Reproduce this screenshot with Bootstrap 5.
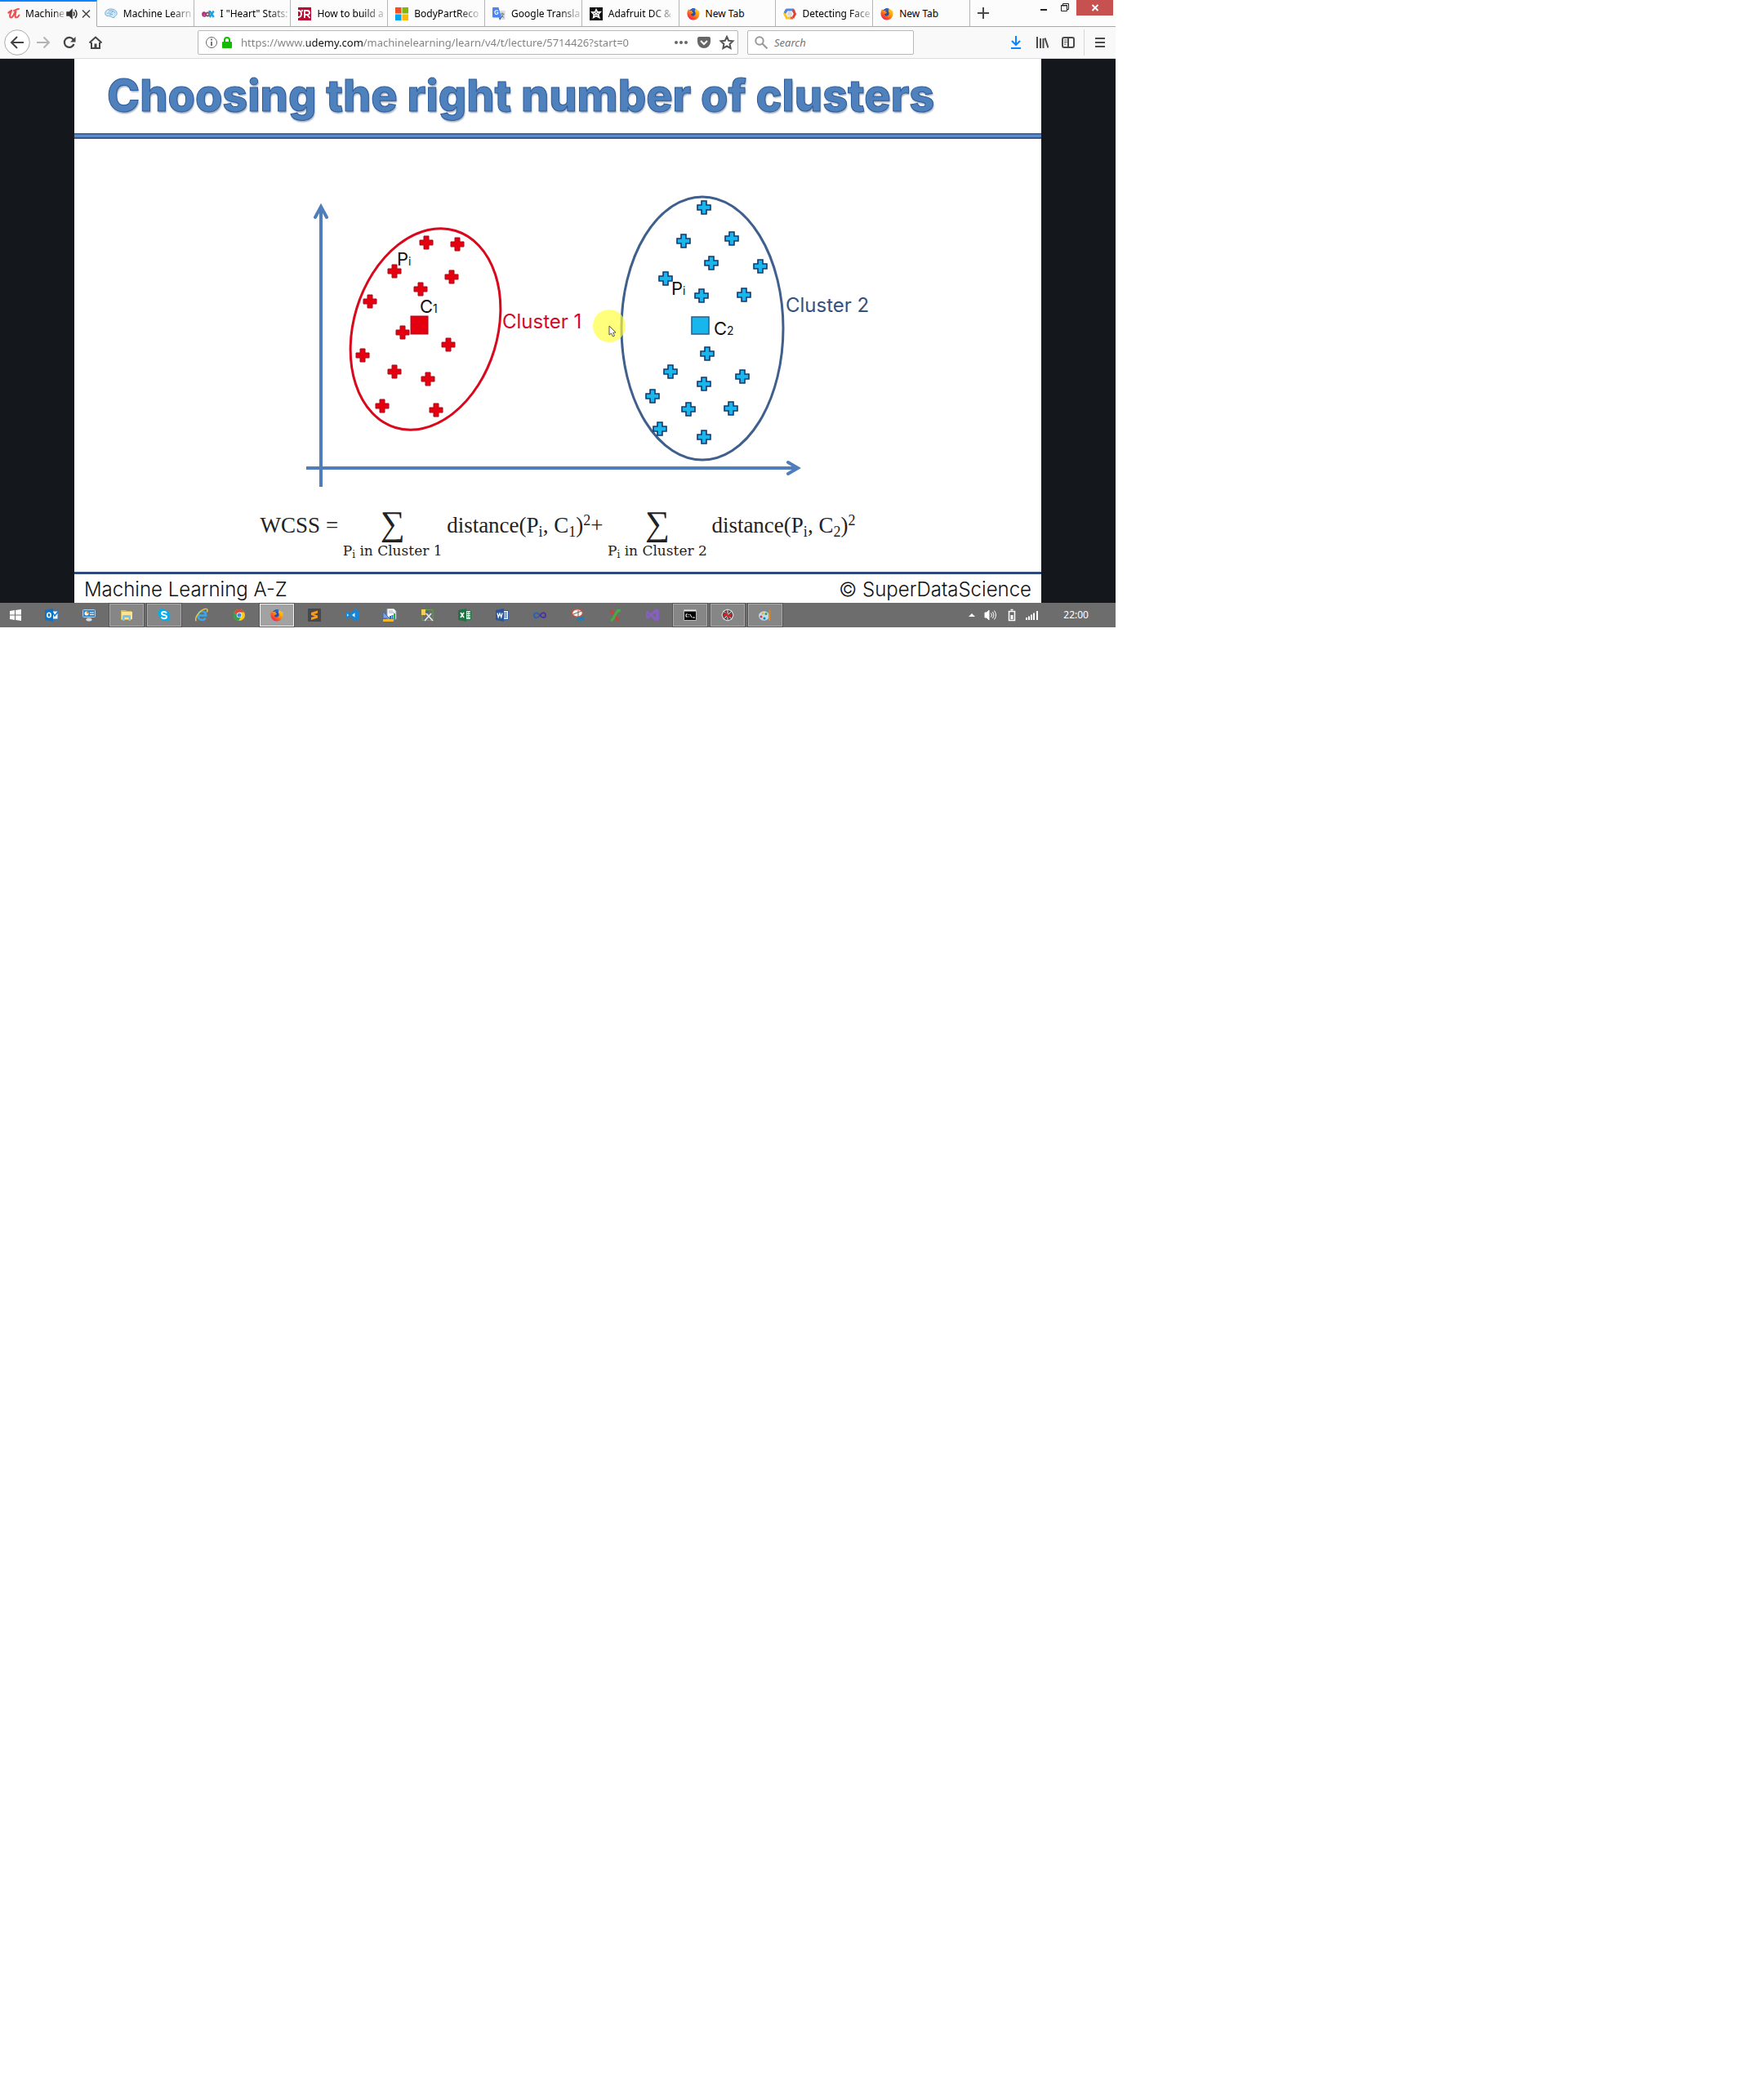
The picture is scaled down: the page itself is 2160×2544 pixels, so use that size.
<!DOCTYPE html>
<html lang="en">
<head>
<meta charset="utf-8">
<meta name="viewport" content="width=device-width, initial-scale=1">
<title>Machine Learning A-Z</title>
<link href="https://cdn.jsdelivr.net/npm/bootstrap@5.3.0/dist/css/bootstrap.min.css" rel="stylesheet">
<script src="https://cdn.jsdelivr.net/npm/bootstrap@5.3.0/dist/js/bootstrap.bundle.min.js" defer></script>
<style>
body { background: #fff; font-family: "Noto Sans", "Open Sans", sans-serif; font-size: 12px; line-height: 16px; color: #0c0c0d; }
svg { display: block; flex: none; }
button { font: inherit; color: inherit; }
.desk { max-width: 1366px; }
/* tab strip */
.strip { background: #fcfcfc; height: 33px; }
.strip-end { flex: none; width: 178px; border-bottom: 1px solid #a9a9a9; }
.tabs-row { display: grid; grid-template-columns: repeat(10, minmax(0, 1fr)); flex: 1 1 0; min-width: 0; }
.tab { min-width: 0; height: 33px; padding: 2px 4px 0 9px; gap: 7px; background: none; border: 0; border-right: 1px solid #b5b5b5; border-bottom: 1px solid #a9a9a9; color: #000; }
.tab.current { background: #f9f9fa; border-bottom-color: #f9f9fa; border-top: 2px solid #0a84ff; padding: 0 4px 0 9px; gap: 6px; border-right-color: #a9a9a9; }
.tab-name { white-space: nowrap; text-align: left; -webkit-mask-image: linear-gradient(90deg, #000 70%, #0003); mask-image: linear-gradient(90deg, #000 70%, #0003); }
.tab-name.whole { -webkit-mask-image: none; mask-image: none; }
.tab-tools { margin-left: -4px; }
.winbtn { border: 0; background: none; padding: 0; height: 19px; }
.win-small { width: 26px; }
.win-close { background: #c75050; width: 45px; margin-right: 3px; }
.plus { border: 0; background: none; padding: 0; width: 32px; height: 32px; }
/* tool bar */
.tools { height: 39px; background: #f9f9fa; border-bottom: 1px solid #dcdcdc; padding: 0 3px 0 5px; }
.tool { border: 0; background: none; padding: 0; width: 32px; height: 32px; display: flex; align-items: center; justify-content: center; }
.field { height: 30px; background: #fff; border: 1px solid #b8b8b8; border-radius: 2px; }
.address { margin-left: 109px; padding: 0 3px 0 8px; }
.address input, .search input { border: 0; outline: 0; background: transparent; padding: 0; min-width: 0; font-size: 13px; line-height: 20px; }
.address input { margin-left: 6px; color: transparent; background-image: linear-gradient(90deg, #808080 80px, #0c0c0d 80px, #0c0c0d 150px, #808080 150px); -webkit-background-clip: text; background-clip: text; }
.search { width: 204px; margin-left: 11px; padding: 0 8px; gap: 8px; }
.search input::placeholder { color: #757575; font-style: italic; opacity: 1; }
.search input { width: 120px; }
.rightset { margin-left: 109px; }
.divline { width: 1px; height: 32px; background: #d7d7db; margin: 0 3px; }
/* slide */
.stage { background: #14181d; }
.slide { max-width: 1184px; background: #fff; font-family: Inter, "Open Sans", sans-serif; color: #111; }
.slide h1 { margin: 0; padding: 15px 40px 16px; font-size: 54px; line-height: 60px; font-weight: 800; color: #4f81bd; -webkit-text-stroke: 1px #2c5c9c; text-shadow: 1px 2px 2px #9aa4b4; white-space: nowrap; }
.bar-top { height: 7px; background: #5b8bd0; border-top: 2px solid #3d66a0; border-bottom: 2px solid #34568a; }
.bar-foot { height: 3px; background: #2c4a7c; }
.formula { height: 90px; padding-top: 17px; font-family: "Liberation Serif", serif; font-size: 27px; line-height: 32px; color: #222; white-space: nowrap; }
.formula sub, .formula sup { font-size: 18px; line-height: 0; }
.sum { width: 123px; }
.sum-sign { font-size: 42px; line-height: 28px; margin-bottom: 10px; }
.sum-under { font-family: "DejaVu Serif", serif; font-size: 17px; line-height: 18px; }
.sum-under sub { font-size: 12px; }
.gap-a { column-gap: 5px; }
.foot { height: 35px; padding: 0 12px; font-size: 24px; line-height: 37px; font-weight: 300; }
/* task bar */
.taskbar { height: 30px; background: #6d6d6d; }
.task { width: 42px; height: 30px; border: 0; background: none; padding: 0; display: flex; align-items: center; justify-content: center; }
.task.start { width: 38px; }
.task.open { background: #868686; border: 1px solid #a9a9a9; outline: 1px solid #555; outline-offset: 0; height: 28px; }
.task.front { background: #a2a2a2; border-color: #f4f4f4; }
.tray { gap: 9px; color: #fff; }
.clock { width: 94px; padding-right: 33px; text-align: right; color: #fff; }
</style>
</head>
<body>
<svg width="0" height="0" class="position-absolute" aria-hidden="true">
  <defs>
    <linearGradient id="fxg" x1="1" y1="0" x2="0.2" y2="1"><stop offset="0" stop-color="#ffe226"/><stop offset=".45" stop-color="#ff9a0a"/><stop offset=".75" stop-color="#ff4a2a"/><stop offset="1" stop-color="#e5156c"/></linearGradient>
    <symbol id="fx" viewBox="0 0 16 16"><circle cx="8" cy="8.200" r="6.800" fill="#2450a8"/><path d="M1 4.500 2 2l1.600 2L7 3.600 6 5l2 1-1 1.600-2 .6c.2 2 2 2.800 3.500 2.200 2-.8 2.600-2.600 1.800-4.400-.6-1.400-1.300-2-1-4.600 2.500.6 4 1.600 4.600 3.200L15 4c1.200 4.500.2 8-2.600 10.200-3 2-7 1.700-9.400-.7C.4 11-.1 7.600 1 4.500z" fill="url(#fxg)"/><path d="M6 1.500c2-.8 3.600-.4 4.500.2L9.800 5 7 4z" fill="#2d63c8"/></symbol>
    <path id="cr" d="M-3-8H3V-3H8V3H3V8H-3V3H-8V-3H-3Z"/>
  </defs>
</svg>

<div class="desk">
<header>
  <div class="strip d-flex">
    <div class="tabs-row" role="tablist">
      <button class="tab current d-flex align-items-center" role="tab" aria-selected="true">
        <svg width="16" height="16" viewBox="0 0 16 16" fill="none" stroke="#ec5252" stroke-linecap="round" stroke-linejoin="round"><path d="M1.500 6.500 5 4C3.500 7.500 2 12.500 4.500 12.500S8 9 9.500 5.500" stroke-width="2.200"/><path d="M8 4c2 0 3-2 6-2M10.500 5C9.500 9 9 12.500 11 12.500s2.500-1.500 3.500-3" stroke-width="2"/></svg>
        <span class="tab-name">Machine</span>
        <svg class="tab-tools" width="32" height="16" viewBox="0 0 32 16" fill="none" stroke="#333" stroke-width="1.500"><path d="M1 6h3l3-3v10l-3-3H1z" fill="#333"/><path d="M9 5.500q2 2.500 0 5M11 3q4 5 0 10"/><path d="m20 3.500 9 9m0-9-9 9" stroke="#444"/></svg>
      </button>
      <button class="tab d-flex align-items-center" role="tab">
        <svg width="16" height="16" viewBox="0 0 16 16" fill="none" stroke="#6fb2e0"><path d="M1 9C-.5 5 4 1.500 8 2c5 0 8 3.500 7 6.500-.5 2-2.500 1.500-3 4H9.500C8 9.500 3 12 1 9z" fill="#cfe6f6"/><path d="M3 8c2-3 4 1 6-2s3 0 4 1M5 4c2 1 4-1 6 1M6 9l4-.5"/></svg>
        <span class="tab-name">Machine Learn</span></button>
      <button class="tab d-flex align-items-center" role="tab">
        <svg width="16" height="16" viewBox="0 0 16 16" fill="none" stroke-width="1.800"><path d="M1.500 8.500h3.300C4.500 5 1 6 1 8.500s3 3 4 1.500" stroke="#b52b82"/><circle cx="7.200" cy="8.500" r="2" stroke="#8a4a66"/><path d="M9.300 4v7" stroke="#777"/><path d="m9.700 4.500 5 7.500m0-7.500-5 7.500" stroke="#1d9fe0" stroke-width="2.400"/></svg>
        <span class="tab-name">I "Heart" Stats:</span></button>
      <button class="tab d-flex align-items-center" role="tab">
        <svg width="16" height="16" viewBox="0 0 16 16"><path fill="#bd0a34" d="M0 0h16v16H0z"/><path d="M0 4q4 0 4 4t-4 4M5.500 3l-1 2M8 13V4h3q3 0 3 2.500T11 9H8m3 0 3.500 4" fill="none" stroke="#fff" stroke-width="1.800"/></svg>
        <span class="tab-name">How to build a</span></button>
      <button class="tab d-flex align-items-center" role="tab">
        <svg width="16" height="16" viewBox="0 0 16 16"><path fill="#f25022" d="M0 0h7.500v7.500H0z"/><path fill="#7fba00" d="M8.500 0H16v7.500H8.500z"/><path fill="#00a4ef" d="M0 8.500h7.500V16H0z"/><path fill="#ffb900" d="M8.500 8.500H16V16H8.500z"/></svg>
        <span class="tab-name">BodyPartReco</span></button>
      <button class="tab d-flex align-items-center" role="tab">
        <svg width="16" height="16" viewBox="0 0 16 16"><path fill="#dcdcdc" d="M6 4h9.500v11H9z"/><path d="m9.500 8 5 .2M12 6.500v1.500m1.500.5L10.500 13m0-3.500 3.500 3" stroke="#5f7480" fill="none"/><path fill="#4a86f0" d="M1 0h6.500l3.500 12.500H1a1 1 0 0 1-1-1V1a1 1 0 0 1 1-1z"/><path fill="#3455c4" d="M8 12.500h3L9 16z"/><path d="M7 4.700Q5 3 3.500 4.500T4 8.300q2.500.7 3-1.800H5" stroke="#fff" stroke-width="1.100" fill="none"/></svg>
        <span class="tab-name">Google Transla</span></button>
      <button class="tab d-flex align-items-center" role="tab">
        <svg width="16" height="16" viewBox="0 0 16 16"><path fill="#111" d="M0 0h16v16H0z"/><path fill="#fff" d="m8 1 2 4 5-.2-3.500 4L13 14l-5-2.500L3.500 14l1-5L1 5l5 .2z"/><path d="M8 5v2M5 7l1.800 1M11 7 9.200 8M6.500 10.500 7.500 9M9.500 10.500 8.500 9" stroke="#111" stroke-width=".9"/></svg>
        <span class="tab-name">Adafruit DC &amp;</span></button>
      <button class="tab d-flex align-items-center" role="tab"><svg width="16" height="16"><use href="#fx"/></svg><span class="tab-name whole">New Tab</span></button>
      <button class="tab d-flex align-items-center" role="tab">
        <svg width="16" height="16" viewBox="0 0 16 16" fill="none" stroke-width="3"><path d="M4 3h8l1.500 2.500" stroke="#4d86ec"/><path d="m12 3 2.500 5-2.700 5" stroke="#e04438"/><path d="M8 13h4" stroke="#e8603a"/><path d="M4 3 1.700 8l2.600 5H9" stroke="#f7c52e"/><path d="M4.500 2.500 2 7" stroke="#4d86ec"/><circle cx="8" cy="8" r="3" fill="#d9d9dc"/></svg>
        <span class="tab-name">Detecting Face</span></button>
      <button class="tab d-flex align-items-center" role="tab"><svg width="16" height="16"><use href="#fx"/></svg><span class="tab-name whole">New Tab</span></button>
    </div>
    <div class="strip-end d-flex justify-content-between">
      <button class="plus" aria-label="New tab"><svg width="32" height="32" viewBox="0 0 32 32" stroke="#4a4a4a" stroke-width="2"><path d="M9 16h14M16 9v14"/></svg></button>
      <div class="d-flex">
        <button class="winbtn win-small" aria-label="Minimize"><svg width="26" height="19" viewBox="0 0 26 19"><path fill="#222" d="M8 11h8v2H8z"/></svg></button>
        <button class="winbtn win-small" aria-label="Restore"><svg width="26" height="19" viewBox="0 0 26 19" fill="none" stroke="#222"><path d="M7.500 6.500h7v7h-7z" /><path d="M7 7h8M9.500 6V4.500h7v7H15"/></svg></button>
        <button class="winbtn win-close" aria-label="Close"><svg width="45" height="19" viewBox="0 0 45 19" stroke="#fff" stroke-width="1.800"><path d="m19.500 6 7 7m0-7-7 7"/></svg></button>
      </div>
    </div>
  </div>
  <div class="tools d-flex align-items-center">
    <button class="tool" aria-label="Back"><svg width="32" height="32" viewBox="0 0 32 32" fill="none"><circle cx="16" cy="16" r="15.300" fill="#fff" stroke="#aaa"/><path d="M24 16H9m7-7-7 7 7 7" stroke="#444" stroke-width="2"/></svg></button>
    <button class="tool" aria-label="Forward"><svg width="16" height="16" viewBox="0 0 16 16" fill="none" stroke="#b4b4b4" stroke-width="2"><path d="M0 8h15M8.500 1.500 15 8l-6.500 6.500"/></svg></button>
    <button class="tool" aria-label="Reload"><svg width="16" height="16" viewBox="0 0 16 16" fill="none" stroke="#444" stroke-width="2.200"><path d="M12.800 4.500A6 6 0 1 0 13.500 10"/><path d="M15.500 1v6.500H9z" fill="#444" stroke="none"/></svg></button>
    <button class="tool" aria-label="Home"><svg width="16" height="16" viewBox="0 0 16 16" fill="none" stroke="#444" stroke-width="2"><path d="M.5 8.500 8 1.500l7.500 7M3 8v7h10V8"/><path d="M6.500 9.500h3V15h-3z" fill="#444" stroke="none"/></svg></button>
    <div class="field address d-flex align-items-center flex-fill gap-1">
      <svg width="16" height="16" viewBox="0 0 16 16" fill="none" stroke="#666"><circle cx="8" cy="8" r="6.500"/><path d="M8 3.500v2M8 7v5" stroke-width="1.800"/></svg>
      <svg width="14" height="16" viewBox="0 0 14 16"><path d="M4 8V5a3 3 0 0 1 6 0v3" fill="none" stroke="#12bc00" stroke-width="2"/><rect x="1" y="7" width="12" height="8" rx="1" fill="#12bc00"/></svg>
      <input class="flex-fill" type="text" aria-label="Address" value="https://www.udemy.com/machinelearning/learn/v4/t/lecture/5714426?start=0">
      <div class="d-flex gap-2 align-items-center">
        <svg width="20" height="16" viewBox="0 0 20 16" fill="#666"><circle cx="4" cy="8" r="2"/><circle cx="10" cy="8" r="2"/><circle cx="16" cy="8" r="2"/></svg>
        <svg width="20" height="16" viewBox="0 0 20 16"><path d="M4 1h12q2 0 2 2v4a8 8 0 0 1-16 0V3q0-2 2-2z" fill="#666"/><path d="m6 6 4 4 4-4" fill="none" stroke="#fff" stroke-width="2"/></svg>
        <svg width="20" height="18" viewBox="0 0 20 18"><path d="m10 2 2.200 4.700 5.200.6-3.800 3.600 1 5.100L10 13.500 5.400 16l1-5.100-3.800-3.600 5.200-.6z" fill="none" stroke="#555" stroke-width="2"/></svg>
      </div>
    </div>
    <div class="field search d-flex align-items-center">
      <svg width="16" height="16" viewBox="0 0 16 16" fill="none" stroke="#999" stroke-width="2"><circle cx="6" cy="6" r="4.700"/><path d="m9.500 9.500 6 6"/></svg>
      <input type="search" aria-label="Search" placeholder="Search">
    </div>
    <div class="d-flex align-items-center rightset">
      <button class="tool" aria-label="Downloads"><svg width="16" height="16" viewBox="0 0 16 16" fill="none" stroke="#0a84ff" stroke-width="2"><path d="M8 0v11M3 6l5 5 5-5M2 15h12"/></svg></button>
      <button class="tool" aria-label="Library"><svg width="16" height="16" viewBox="0 0 16 16" stroke="#4a4a4a" stroke-width="2"><path d="M2 1v14M6 3v12M9.500 3v12M11.500 2.500l4 12"/></svg></button>
      <button class="tool" aria-label="Sidebars"><svg width="16" height="16" viewBox="0 0 16 16" fill="none" stroke="#4a4a4a" stroke-width="2"><rect x="1" y="2" width="14" height="12" rx="2"/><path d="M8 2v12"/><path d="M3 5h3.500M3 7.500h3.500M3 10h2.500" stroke-width="1"/></svg></button>
      <div class="divline"></div>
      <button class="tool" aria-label="Menu"><svg width="14" height="16" viewBox="0 0 14 16" stroke="#4a4a4a" stroke-width="2"><path d="M1 3h12M1 8h12M1 13h12"/></svg></button>
    </div>
  </div>
</header>

<main class="stage">
  <article class="slide mx-auto">
    <h1>Choosing the right number of clusters</h1>
    <div class="bar-top"></div>
    <svg class="w-100 h-auto" viewBox="91 170 1184 440" font-family="Inter, 'Open Sans', sans-serif" role="img" aria-label="Two clusters of points with their centroids">
      <g fill="none" stroke="#4f7fba" stroke-width="4"><path d="M393 596V253M375 573H977"/><path d="m386 266 7-13 7 13M965 566l12 7-12 7" stroke-linecap="round"/></g>
      <ellipse cx="521" cy="403" rx="88" ry="126" transform="rotate(17 521 403)" fill="none" stroke="#d9081c" stroke-width="3"/>
      <ellipse cx="860" cy="402" rx="99" ry="161" fill="none" stroke="#3f5f8c" stroke-width="3"/>
      <g fill="#e4000f" stroke="#a80a1c">
        <use href="#cr" x="522" y="297"/><use href="#cr" x="560" y="299"/><use href="#cr" x="483" y="332"/><use href="#cr" x="553" y="339"/><use href="#cr" x="515" y="354"/><use href="#cr" x="453" y="369"/><use href="#cr" x="493" y="407"/><use href="#cr" x="549" y="422"/><use href="#cr" x="444" y="435"/><use href="#cr" x="483" y="455"/><use href="#cr" x="524" y="464"/><use href="#cr" x="468" y="497"/><use href="#cr" x="534" y="502"/>
        <rect x="503" y="387" width="21" height="22"/>
      </g>
      <g fill="#17b6ec" stroke="#15386e" stroke-width="1.600">
        <use href="#cr" x="862" y="254"/><use href="#cr" x="837" y="295"/><use href="#cr" x="896" y="292"/><use href="#cr" x="871" y="322"/><use href="#cr" x="931" y="326"/><use href="#cr" x="815" y="341"/><use href="#cr" x="859" y="362"/><use href="#cr" x="911" y="361"/><use href="#cr" x="866" y="433"/><use href="#cr" x="821" y="455"/><use href="#cr" x="909" y="461"/><use href="#cr" x="862" y="470"/><use href="#cr" x="799" y="485"/><use href="#cr" x="843" y="501"/><use href="#cr" x="895" y="500"/><use href="#cr" x="808" y="525"/><use href="#cr" x="862" y="535"/>
        <rect x="847" y="388" width="21" height="21" stroke="#2d6493"/>
      </g>
      <g font-size="22" fill="#111">
        <text x="486" y="325">P<tspan font-size="14">i</tspan></text>
        <text x="514" y="383">C<tspan font-size="14">1</tspan></text>
        <text x="822" y="361">P<tspan font-size="14">i</tspan></text>
        <text x="874" y="410">C<tspan font-size="14">2</tspan></text>
        <text x="615" y="402" font-size="24" fill="#d4082a">Cluster 1</text>
        <text x="962" y="382" font-size="24" fill="#34517f">Cluster 2</text>
      </g>
      <circle cx="746" cy="399" r="20" fill="#ffff3c" fill-opacity=".68"/>
      <path d="M746 399v11l2.500-2 2 4 2-1-1.800-3.700 3.300-.3z" fill="#fff" stroke="#555"/>
    </svg>
    <div class="formula d-flex justify-content-center gap-a">
      <div>WCSS =</div>
      <div class="sum text-center"><div class="sum-sign">∑</div><div class="sum-under">P<sub>i</sub> in Cluster 1</div></div>
      <div>distance(P<sub>i</sub>, C<sub>1</sub>)<sup>2</sup>+</div>
      <div class="sum text-center"><div class="sum-sign">∑</div><div class="sum-under">P<sub>i</sub> in Cluster 2</div></div>
      <div>distance(P<sub>i</sub>, C<sub>2</sub>)<sup>2</sup></div>
    </div>
    <div class="bar-foot"></div>
    <footer class="foot d-flex justify-content-between"><span>Machine Learning A-Z</span><span>© SuperDataScience</span></footer>
  </article>
</main>

<nav class="taskbar d-flex justify-content-between align-items-center" aria-label="Taskbar">
  <div class="d-flex align-items-center gap-1">
    <button class="task start" aria-label="Start"><svg width="14" height="14" viewBox="0 0 14 14" fill="#fff"><path d="m0 2 6-1v5.500H0zM7 1l7-1v6.500H7zM0 7.500h6V13l-6-1zM7 7.500h7V14l-7-1z"/></svg></button>
    <button class="task" aria-label="Outlook"><svg width="16" height="16" viewBox="0 0 16 16"><path d="M8 3h8v10H8z" fill="#fff" stroke="#1277c8"/><path d="m9 4 3 5 4-5" fill="none" stroke="#1277c8" stroke-width="1.500"/><path d="m0 2 10-2v16L0 14z" fill="#0e72c6"/><ellipse cx="5" cy="8" rx="2.200" ry="2.700" fill="none" stroke="#fff" stroke-width="1.600"/></svg></button>
    <button class="task" aria-label="System"><svg width="16" height="16" viewBox="0 0 16 16"><rect x=".5" y="1.500" width="15" height="9" rx="1" fill="#2f86d0" stroke="#a9d1f0"/><circle cx="5" cy="6" r="2.500" fill="#fff"/><path d="M5 6V3.500A2.500 2.500 0 0 1 7.500 6z" fill="#f28c22"/><path d="M9 5h5M9 7.500h5" stroke="#fff"/><ellipse cx="8" cy="13.500" rx="3.500" ry="2" fill="#d8dde2"/></svg></button>
    <button class="task open" aria-label="File Explorer"><svg width="16" height="16" viewBox="0 0 16 16"><path d="M1 2h6l1 1h6v11H1z" fill="#dcb955"/><path d="M2 4h13v9H2z" fill="#f8e59b"/><path d="M3 15V9.500Q3 8 5 8h6q2 0 2 1.500V15h-2.500v-4h-5v4z" fill="#7cc2e8"/></svg></button>
    <button class="task open" aria-label="Skype"><svg width="16" height="16" viewBox="0 0 16 16"><circle cx="5.500" cy="5.500" r="5" fill="#00aff0"/><circle cx="10.500" cy="10.500" r="5" fill="#00aff0"/><circle cx="8" cy="8" r="6.500" fill="#00aff0"/><path d="M11 5.500Q10 4 8 4 5 4 5 6c0 2.500 6 1.500 6 4 0 2-2 2.300-3 2.300-2 0-3-1-3.300-2" fill="none" stroke="#fff" stroke-width="1.900"/></svg></button>
    <button class="task" aria-label="Internet Explorer"><svg width="18" height="18" viewBox="0 0 18 18" fill="none"><path d="M4.500 9.500H14C14 6 12 4.500 9.300 4.500S4.500 7 4.500 10s2 5 5 5c2 0 3.300-.8 4-2.300" stroke="#3aa7ea" stroke-width="2.700"/><path d="M2.500 16C-1 14.500 6 3 13 1.500c4-.8 3 2.500 2.300 4" stroke="#f4c430" stroke-width="1.500"/></svg></button>
    <button class="task" aria-label="Chrome"><svg width="14" height="14" viewBox="0 0 16 16"><circle cx="8" cy="8" r="8" fill="#fbc91b"/><path d="M1 4A8 8 0 0 1 15 4H8L5 9z" fill="#dd4738"/><path d="M1 4a8 8 0 0 0 6 12l3.500-6L5 9z" fill="#2fa14f"/><circle cx="8" cy="8" r="3.700" fill="#fff"/><circle cx="8" cy="8" r="2.900" fill="#4587ee"/></svg></button>
    <button class="task open front" aria-label="Firefox"><svg width="16" height="16"><use href="#fx"/></svg></button>
    <button class="task" aria-label="Sublime Text"><svg width="16" height="16" viewBox="0 0 16 16"><path fill="#484848" d="M0 0h16v16H0z"/><path d="m4 5 8-2.500v3L7.500 7 12 8.500v3L4 14v-3l4.500-1.500L4 8z" fill="#ff9a12"/></svg></button>
    <button class="task" aria-label="Visual Studio Code"><svg width="16" height="16" viewBox="0 0 16 16"><path d="m11 .500 5 2v11l-5 2z" fill="#1485d8"/><path fill="#1485d8" fill-rule="evenodd" d="M0 4.500 2 3.500 6 6.500 11 1V15L6 9.500 2 12.500 0 11.500ZM2 6.200V9.800L4 8ZM8 8 11.500 10.700V5.300Z"/><path d="M2 6.200v3.600L4 8zM8 8l3.500 2.700V5.300z" fill="#e8f2fa"/></svg></button>
    <button class="task" aria-label="Reports"><svg width="18" height="16" viewBox="0 0 18 16"><path d="M6 0h8l3 3v10H6z" fill="#fff" stroke="#8ba3c7"/><path d="M8 3h5M8 5h7" stroke="#9ab"/><path d="M9 9h2v4H9z" fill="#2a6ed0"/><path d="M11.500 8h2v5h-2z" fill="#2d6fcb"/><path d="M14 6h2v7h-2z" fill="#2bb04a"/><path d="M1 4v8h8z" fill="#7fa3df" stroke="#3d69b3"/><path fill="#f1b82f" d="M1 13h13v3H1z"/></svg></button>
    <button class="task" aria-label="Database tools"><svg width="16" height="16" viewBox="0 0 16 16" fill="none"><path d="M6 1.500h9v13H2V6" stroke="#55c02c" stroke-dasharray="2 1"/><path d="M1 1h5v7H1z" fill="#f4cf58"/><path d="m5 15 8-9m-7-1 9 10" stroke="#dfe6ee" stroke-width="1.800"/><path d="m6 5 4-1" stroke="#4d6580" stroke-width="2"/></svg></button>
    <button class="task" aria-label="Excel"><svg width="16" height="16" viewBox="0 0 16 16"><path fill="#fff" stroke="#1f7244" d="M8 2.500h7.500v11H8z"/><path d="M11.500 4v8M14 4v8" stroke="#1f7244" stroke-width="1.500" stroke-dasharray="1.500 1"/><path d="m0 2 10-2v16L0 14z" fill="#1f7244"/><path d="m3 5 4 6m0-6-4 6" stroke="#fff" stroke-width="1.600"/></svg></button>
    <button class="task" aria-label="Word"><svg width="16" height="16" viewBox="0 0 16 16"><path fill="#fff" stroke="#2a5699" d="M8 2.500h7.500v11H8z"/><path d="M10 5h4M10 7h4M10 9h4M10 11h4" stroke="#2a5699"/><path d="m0 2 10-2v16L0 14z" fill="#2a5699"/><path d="m2 5.500 1.200 5L5 6l1.800 4.500L8 5.500" fill="none" stroke="#fff" stroke-width="1.300"/></svg></button>
    <button class="task" aria-label="Blend"><svg width="16" height="16" viewBox="0 0 16 16" fill="none" stroke-width="2"><path d="M8 8C5 4.500 1 5 1 8.500S5 12 8 9" stroke="#2f5fae"/><path d="M8 9c2.500-5 7-4.500 7-1s-4 4.500-7 0" stroke="#4d349c"/></svg></button>
    <button class="task" aria-label="Snipping Tool"><svg width="16" height="16" viewBox="0 0 16 16" fill="none"><ellipse cx="8" cy="5.500" rx="6.500" ry="4.700" fill="#f2f2f2" stroke="#c9503a" stroke-width="1.500"/><path d="m3 7 10-4M9 2v9" stroke="#666"/><circle cx="10" cy="13" r="1.800" stroke="#1780b8" stroke-width="1.500"/><circle cx="14" cy="12" r="1.500" stroke="#1780b8" stroke-width="1.500"/></svg></button>
    <button class="task" aria-label="Network tool"><svg width="14" height="16" viewBox="0 0 14 16" fill="none" stroke-width="3"><path d="m2 2 3 5M8 10l3 5" stroke="#dd3b30"/><path d="M2 15C8 12 6 5 12 2" stroke="#46ae3c"/><path d="m9 1 5 0-1 4z" fill="#46ae3c"/></svg></button>
    <button class="task" aria-label="Visual Studio"><svg width="16" height="16" viewBox="0 0 16 16"><path fill="#865fc5" fill-rule="evenodd" d="M0 4 2 3 6 6.200 12 0 16 2V14L12 16 6 9.800 2 13 0 12ZM2 6V10L4 8ZM8 8 12 11V5Z"/></svg></button>
    <button class="task open" aria-label="Command Prompt"><svg width="16" height="14" viewBox="0 0 16 14"><path d="M.5.500h15v13H.5z" fill="#000" stroke="#bbb"/><path d="M1 1h14v1.500H1z" fill="#e8e8e8"/><path d="M5 6H3v3h2M6.500 6v1m0 1.500v1M8 6l2 4M11 10h3" stroke="#fff" fill="none"/></svg></button>
    <button class="task open" aria-label="Spyder"><svg width="16" height="16" viewBox="0 0 16 16" fill="none" stroke="#e4e4e4"><circle cx="8" cy="8" r="5.500" stroke="#333" fill="#555"/><path d="m8 1 5 2 2 5-2 5-5 2-5-2-2-5 2-5zM3 3l10 10M13 3 3 13M8 1v14" /><path d="m3 9 3-3 3 4 4-3" stroke="#d81e26" stroke-width="2.400"/></svg></button>
    <button class="task open" aria-label="Paint"><svg width="16" height="16" viewBox="0 0 16 16"><ellipse cx="6.500" cy="9" rx="6.500" ry="5.800" fill="#b9def2"/><circle cx="3" cy="10" r="1.600" fill="#d8402e"/><circle cx="5" cy="6" r="1.500" fill="#f0b030"/><circle cx="9" cy="6.500" r="1.500" fill="#3d9a48"/><circle cx="7" cy="12" r="1.600" fill="#2878c8"/><path d="M13 6v9" stroke="#e58a25" stroke-width="2.200"/><path d="m12 6 1-6 2 3-1 3z" fill="#c98642"/></svg></button>
  </div>
  <div class="d-flex align-items-center">
    <div class="tray d-flex align-items-center">
      <svg width="10" height="8" viewBox="0 0 10 8"><path d="m1 6 4-4 4 4z" fill="#fff"/></svg>
      <svg width="18" height="16" viewBox="0 0 18 16" fill="none" stroke="#fff"><path d="M2 5h2l3-3v12l-3-3H2z" fill="#fff"/><path d="M9.500 5.500q2 2.500 0 5M11.500 4q3 4 0 8M13.500 2.500q4 5.500 0 11"/></svg>
      <svg width="16" height="16" viewBox="0 0 16 16"><path d="M4.500 3.500h7v11h-7zM6.500 1.500h3" fill="none" stroke="#fff" stroke-width="1.500"/><path d="M6.500 8h3v5h-3z" fill="#fff"/></svg>
      <svg width="16" height="16" viewBox="0 0 16 16" fill="#fff"><path d="M0 11h2v3H0zM3 9.500h2V14H3zM6 7.500h2V14H6zM9 5.500h2V14H9zM13 3h2v11h-2z"/></svg>
    </div>
    <time class="clock">22:00</time>
  </div>
</nav>
</div>
</body>
</html>
